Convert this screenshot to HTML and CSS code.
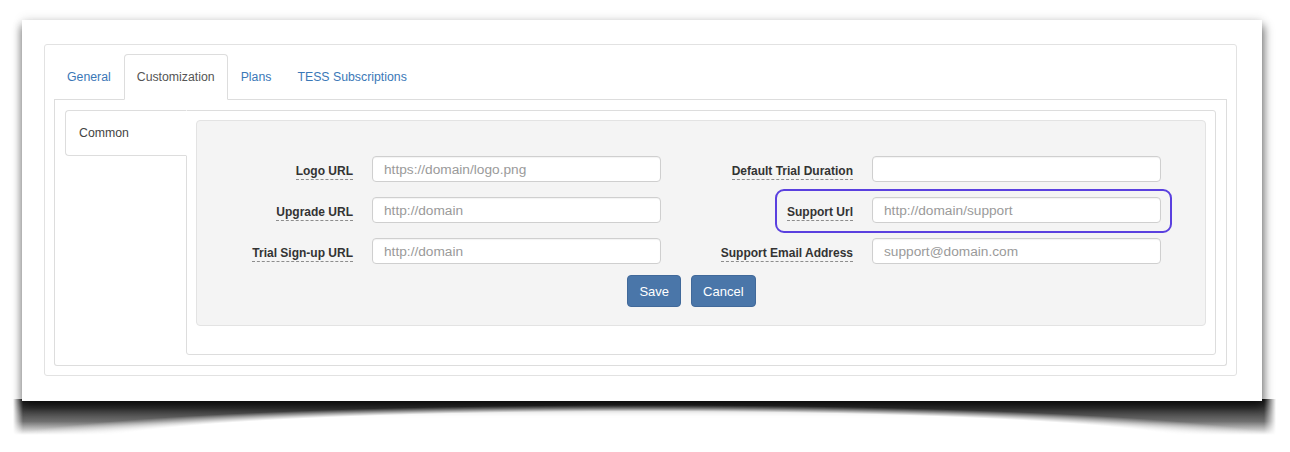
FILE: index.html
```html
<!DOCTYPE html>
<html lang="en">
<head>
	<meta charset="utf-8">
	<title>Settings – Customization</title>
	<link rel="stylesheet" href="styles.css">
</head>
<body>

<div class="stage">
	<div class="curl"></div>

	<div class="sheet">
		<div class="panel">
			<ul class="nav-tabs">
				<li><a href="#general">General</a></li>
				<li class="active"><a href="#customization">Customization</a></li>
				<li><a href="#plans">Plans</a></li>
				<li><a href="#tess">TESS Subscriptions</a></li>
			</ul>

			<div class="tab-content">
				<ul class="side-nav">
					<li class="active"><a href="#common">Common</a></li>
				</ul>

				<div class="side-pane">
					<form class="well">
						<div class="form-grid">
							<label class="control-label" for="logo-url"><span>Logo URL</span></label>
							<input class="form-control" type="text" id="logo-url" placeholder="https://domain/logo.png">
							<label class="control-label" for="trial-duration"><span>Default Trial Duration</span></label>
							<input class="form-control" type="text" id="trial-duration">

							<label class="control-label" for="upgrade-url"><span>Upgrade URL</span></label>
							<input class="form-control" type="text" id="upgrade-url" placeholder="http://domain">
							<label class="control-label" for="support-url"><span>Support Url</span></label>
							<input class="form-control" type="text" id="support-url" placeholder="http://domain/support">

							<label class="control-label" for="signup-url"><span>Trial Sign-up URL</span></label>
							<input class="form-control" type="text" id="signup-url" placeholder="http://domain">
							<label class="control-label" for="support-email"><span>Support Email Address</span></label>
							<input class="form-control" type="text" id="support-email" placeholder="support@domain.com">

							<div class="actions">
								<button type="submit" class="btn">Save</button>
								<button type="button" class="btn">Cancel</button>
							</div>

							<!-- outline drawn over the support url row -->
							<div class="callout"></div>
						</div>
					</form>
				</div>
			</div>
		</div>
	</div>
</div>

</body>
</html>
```

FILE: styles.css
```css
html {
	background: #fff;
}

body {
	box-sizing: border-box;
	height: 100vh;
	margin: 0;
	padding: 20px 0 0 22px;
	overflow: hidden;

	font-size: 12.3px;
	font-family: "Liberation Sans", Arial, Helvetica, sans-serif;
	color: #333;
}

a {
	text-decoration: none;
}

ul {
	list-style: none;
	margin: 0;
	padding: 0;
}

.stage {
	position: relative;
	width: 1240px;
}

/* curled shadow under the sheet: dark band, cut by an ellipse in the middle,
   faded out at both ends */
.curl {
	position: absolute;
	left: -9px;
	right: -14px;
	top: calc(100% - 2px);
	height: 36px;
	background: linear-gradient(to bottom, #1c1c1c 0, #3e3e3e 30%, #6e6e6e 62%, rgba(210, 210, 210, 0) 100%);
	-webkit-mask-image:
		radial-gradient(ellipse 660px 40px at 50% 46px, transparent 84%, #000 100%),
		linear-gradient(to right, transparent, #000 10px, #000 calc(100% - 12px), transparent);
	-webkit-mask-composite: source-in;
	mask-image:
		radial-gradient(ellipse 660px 40px at 50% 46px, transparent 84%, #000 100%),
		linear-gradient(to right, transparent, #000 10px, #000 calc(100% - 12px), transparent);
	mask-composite: intersect;
}

.sheet {
	position: relative;
	box-sizing: border-box;
	padding: 24px 25px 25px 22px;
	background: #fff;
	box-shadow:
		0 -1px 10px rgba(0, 0, 0, 0.1),
		-2px 6px 8px rgba(0, 0, 0, 0.3),
		3px 6px 9px rgba(0, 0, 0, 0.38);
}

.panel {
	border: 1px solid #e2e2e2;
	border-radius: 3px;
	padding: 9px;
}

/* top tabs */
.nav-tabs {
	display: flex;
	border-bottom: 1px solid #ddd;
}

.nav-tabs li {
	margin-bottom: -1px;
}

.nav-tabs a {
	display: block;
	padding: 0 12px;
	line-height: 44px;
	border: 1px solid transparent;
	border-radius: 4px 4px 0 0;
	color: #3b78b7;
}

.nav-tabs .active a {
	color: #555;
	background: #fff;
	border-color: #ddd;
	border-bottom-color: transparent;
}

.tab-content {
	display: flex;
	align-items: flex-start;
	padding: 10px;
	border: 1px solid #ddd;
	border-top: 0;
	border-radius: 0 0 3px 3px;
}

/* left stacked tabs */
.side-nav {
	position: relative;
	z-index: 1;
	flex: 0 0 122px;
	margin-right: -1px;
}

.side-nav a {
	display: block;
	padding-left: 13px;
	line-height: 44px;
	color: #444;
	background: #fff;
	border: 1px solid #ddd;
	border-right-color: #fff;
	border-radius: 4px 0 0 4px;
}

.side-pane {
	flex: 1;
	padding: 9px;
	border: 1px solid #ddd;
	border-radius: 0 3px 3px 3px;
}

.well {
	margin: 0 0 19px;
	padding: 35px 44px 18px 19px;
	background: #f4f4f4;
	border: 1px solid #e3e3e3;
	border-radius: 4px;
}

.form-grid {
	position: relative;
	display: grid;
	grid-template-columns: 137px 289px 173px 289px;
	column-gap: 19px;
	row-gap: 15px;
	align-items: start;
}

.control-label {
	padding-top: 4px;
	line-height: 22px;
	text-align: right;
	font-size: 12px;
	font-weight: bold;
	color: #333;
	white-space: nowrap;
}

.control-label span {
	padding-bottom: 1px;
	border-bottom: 1px dashed #8d8d8d;
}

.form-control {
	box-sizing: border-box;
	height: 26px;
	margin: 0;
	padding: 0 11px;
	font: 13.7px "Liberation Sans", Arial, Helvetica, sans-serif;
	color: #555;
	background: #fff;
	border: 1px solid #cfcfcf;
	border-radius: 4px;
	box-shadow: inset 0 1px 1px rgba(0, 0, 0, 0.05);
	outline: none;
}

.form-control::placeholder {
	color: #9a9a9a;
}

.callout {
	position: absolute;
	grid-area: 2 / 3 / 3 / 5;
	top: -8px;
	right: -11px;
	bottom: -10px;
	left: 95px;
	border: 2px solid #5a40df;
	border-radius: 9px;
	pointer-events: none;
}

.actions {
	grid-column: 1 / -1;
	display: flex;
	justify-content: center;
	gap: 10px;
	margin-top: -4px;
	padding-left: 6px;
}

.btn {
	height: 32px;
	padding: 0 11px;
	font: 13px "Liberation Sans", Arial, Helvetica, sans-serif;
	color: #fff;
	background: #4a76a9;
	border: 1px solid #41699a;
	border-radius: 4px;
}
```
